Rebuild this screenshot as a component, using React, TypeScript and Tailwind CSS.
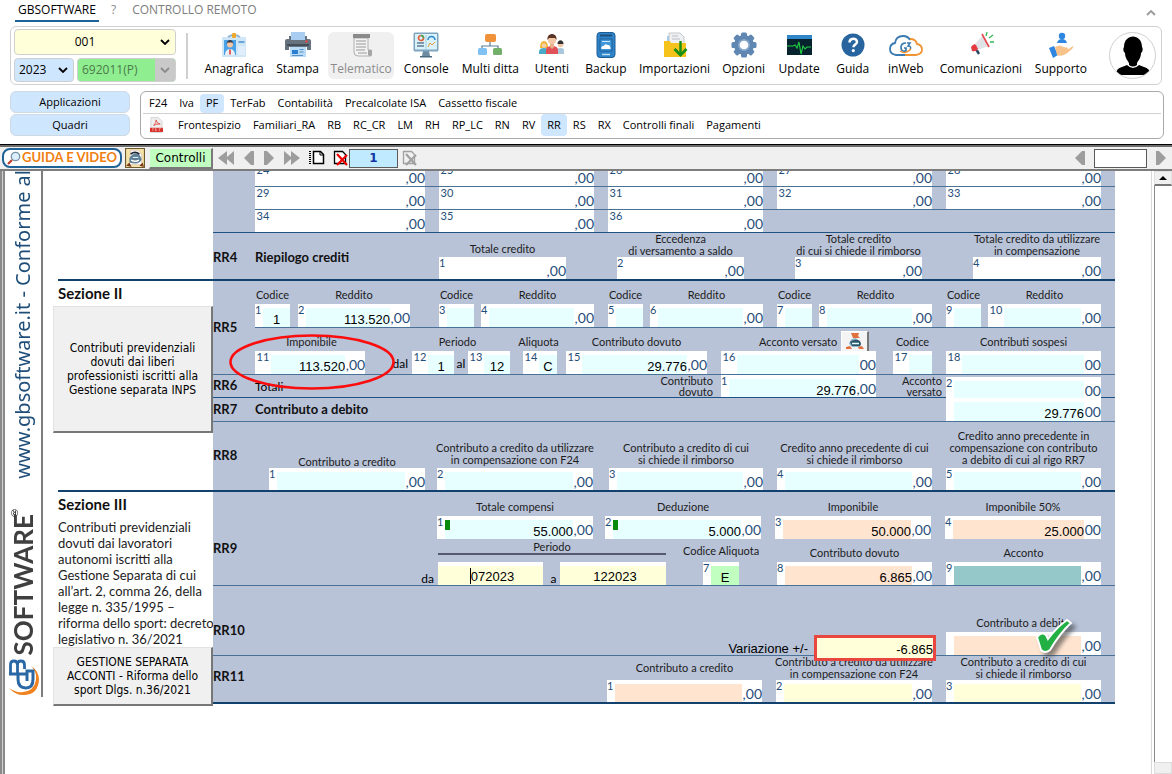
import type { ReactNode } from "react";

const TEAL = "bg-[#e8ffff]";
const PEACH = "bg-[#ffe4cf]";
const YELLOW = "bg-[#ffffd9]";

/* ---------- icons ---------- */

function BadgeIcon() {
  return (
    <svg width="26" height="26" viewBox="0 0 26 26">
      <rect x="1" y="5" width="24" height="20" rx="1" fill="#cfe6f7" />
      <rect x="3" y="8" width="12" height="15" fill="#4aa3e8" />
      <path d="M7 5q6-4 12 0" stroke="#8fb4d4" strokeWidth="2" fill="none" />
      <rect x="11" y="1" width="4" height="5" rx="1" fill="#f0a92b" />
      <circle cx="9" cy="12.500" r="3" fill="#f3c6a5" />
      <path d="M5.500 12.500c0-6 7-6 7 0l-1-2H6.500z" fill="#3a3a44" />
      <path d="M4 23c0-8 10-8 10 0z" fill="#e9eef4" />
      <path d="M9 17.500v5" stroke="#d33" strokeWidth="1.500" />
      <path d="M17.500 10h6" stroke="#4a8fd0" strokeWidth="1.500" />
      <path d="M17 14h7v9h-7z" fill="#dfeefa" />
    </svg>
  );
}

function PrinterIcon() {
  return (
    <svg width="26" height="26" viewBox="0 0 26 26">
      <path d="M6 0h14v9H6z" fill="#a9cdf0" />
      <path d="M0 9q0-2 2-2h2V4h2v4h14V4h2v3h2q2 0 2 2v9h-4v-3H4v3H0z" fill="#66727e" />
      <path d="M2 12h22v2H2z" fill="#434e59" />
      <circle cx="21.500" cy="9.500" r="1.200" fill="#e44" />
      <path d="M5 15h16v10H5z" fill="#b9dbf7" />
      <path d="M7 18h6v4H7z" fill="#2b7fd0" />
      <path d="M14.500 17.500h4M14.500 20h4M7 23.500h11" stroke="#5a93c4" />
    </svg>
  );
}

function ReceiptIcon() {
  return (
    <svg width="26" height="26" viewBox="0 0 26 26">
      <path d="M6 6h14v12h3v6H10q-4 0-4-4z" fill="#f3f3f3" stroke="#b0b0b0" />
      <path d="M5 2h17v4H5z" fill="#8b8b8b" />
      <path d="M8 9h10M8 12h10M8 15h10M8 18h9M10 21h9" stroke="#9a9a9a" strokeWidth="1.200" />
      <path d="M20 18h4v5q-2 2-4 0z" fill="#a5a5a5" />
    </svg>
  );
}

function ConsoleIcon() {
  return (
    <svg width="26" height="26" viewBox="0 0 26 26">
      <path d="M10 19h6l1 5h-8z" fill="#6d8ba0" />
      <path d="M7 24h12v1.500H7z" fill="#4b6a80" />
      <rect x="0.500" y="0.500" width="25" height="19" rx="1.500" fill="#7fa4bd" />
      <rect x="2" y="2" width="22" height="15.500" fill="#d9f2fb" />
      <circle cx="8" cy="6" r="2.500" fill="none" stroke="#e2603c" strokeWidth="1.700" />
      <path d="M8 3.500a2.500 2.500 0 0 1 2.500 2.500" fill="none" stroke="#3cae5a" strokeWidth="1.700" />
      <path d="M15 8a3.500 3.500 0 0 1 7 0" fill="none" stroke="#2b86c8" strokeWidth="1.500" />
      <path d="M13 3v14" stroke="#a8cfe0" />
      <path d="M4 11h7M4 14h7" stroke="#5d7b90" strokeWidth="1.500" />
      <path d="M15 15l2-4 2 2 3-3" fill="none" stroke="#e99b3b" />
    </svg>
  );
}

function OrgIcon() {
  return (
    <svg width="26" height="26" viewBox="0 0 26 26">
      <path d="M13 10v4M5 17v-3h16v3" fill="none" stroke="#5d7e9c" strokeWidth="1.200" />
      <rect x="8" y="2" width="11" height="8" rx="2" fill="#f0923a" />
      <rect x="1" y="16" width="9" height="7" rx="1.500" fill="#7fc1f2" />
      <rect x="16" y="16" width="9" height="7" rx="1.500" fill="#72b06a" />
    </svg>
  );
}

function UsersIcon() {
  return (
    <svg width="26" height="26" viewBox="0 0 26 26">
      <path d="M0 22v-2q0-4 5-4t5 4v2z" fill="#49a9c9" />
      <path d="M1 16q0-7 4-7t4 7z" fill="#f2b630" />
      <circle cx="5" cy="13.500" r="2.300" fill="#f6cfae" />
      <path d="M18 22v-4q0-2 3.500-2t3.500 2v4z" fill="#a9c8dd" />
      <circle cx="21.500" cy="12.500" r="2.800" fill="#f3c6a5" />
      <path d="M18.500 12c0-5 6-5 6 0z" fill="#333" />
      <path d="M7 22v-4q0-4 6-4t6 4v4z" fill="#e05258" />
      <path d="M11 11h4v4l-2 2-2-2z" fill="#e8b08b" />
      <circle cx="13" cy="8" r="4" fill="#f3c6a5" />
      <path d="M8.500 8c-1-8 10-8 9 0l-1.500-2h-6z" fill="#5b3428" />
    </svg>
  );
}

function BackupIcon() {
  return (
    <svg width="26" height="26" viewBox="0 0 26 26">
      <rect x="4" y="0.500" width="18" height="25" rx="3" fill="#2f83c6" stroke="#1c5d96" />
      <path d="M7 3.500h12" stroke="#1c4f80" strokeWidth="2" />
      <path d="M7 7h12v12H7z" fill="#3f97da" stroke="#1c5d96" />
      <path d="M9 9.500h8" stroke="#cde8fb" />
      <path d="M8.500 17q-1-3 2-3 2-3 4-1 3-.5 3 4z" fill="#fff" />
      <path d="M9 22.500h8" stroke="#bfe0f7" strokeWidth="1.500" />
    </svg>
  );
}

function ImportIcon() {
  return (
    <svg width="26" height="26" viewBox="0 0 26 26">
      <path d="M5 4h3v6H5z" fill="#9ec9ee" />
      <path d="M7 1h11l4 4v9H7z" fill="#eef0f2" stroke="#c4c8cc" />
      <path d="M10 4h6M10 7h8" stroke="#b8bec4" />
      <path d="M2 9h6l1 2h15v14H2z" fill="#f6c21c" />
      <path d="M18.500 9v13" stroke="#159015" strokeWidth="2.400" />
      <path d="M12.500 17l6 6 6-6" fill="none" stroke="#159015" strokeWidth="2.800" />
    </svg>
  );
}

function GearIcon() {
  return (
    <svg width="26" height="26" viewBox="0 0 26 26">
      <g fill="#5f87b2">
        <circle cx="13" cy="13" r="10" />
        {[0, 45, 90, 135].map((a) => (
          <rect key={a} x="10" y="0.500" width="6" height="25" rx="1.500" transform={`rotate(${a} 13 13)`} />
        ))}
      </g>
      <circle cx="13" cy="13" r="6" fill="#86a8cb" />
      <circle cx="13" cy="13" r="4.300" fill="#fff" />
    </svg>
  );
}

function PulseIcon() {
  return (
    <svg width="26" height="26" viewBox="0 0 26 26">
      <rect x="1" y="3" width="25" height="20" fill="#06232e" />
      <rect x="1" y="3" width="25" height="4" fill="#2f86c9" />
      <path d="M1 14h6l2-1 2 3 2-6 2 12 2-8 2 3 2-2h4" fill="none" stroke="#22d142" strokeWidth="1.100" />
    </svg>
  );
}

function HelpIcon() {
  return (
    <svg width="26" height="26" viewBox="0 0 26 26">
      <circle cx="13" cy="13" r="11.500" fill="#28659e" />
      <path d="M9.500 10.500c0-5 7.500-5 7.500-.6 0 2.600-3.600 2.600-3.600 5.400" fill="none" stroke="#fff" strokeWidth="2.500" />
      <circle cx="13.300" cy="18.600" r="1.600" fill="#fff" />
    </svg>
  );
}

function CloudIcon() {
  return (
    <svg width="36" height="26" viewBox="0 0 36 26">
      <path d="M17 23H8q-6-1-6-6 0-5 5-6 1-7 8-7 5 0 7 4" fill="none" stroke="#3a7ab0" strokeWidth="1.800" />
      <path d="M17 23h11q6-1 6-5.500 0-4.500-5-5.500-1-5-7-5" fill="none" stroke="#f09433" strokeWidth="1.800" />
      <path d="M18 11q-5 0-5 4.500t5 3.500v-3h-2" fill="none" stroke="#3a7ab0" strokeWidth="1.700" />
      <path d="M19 11h3l-2 3q4 0 2 4" fill="none" stroke="#3a7ab0" strokeWidth="1.500" />
      <path d="M12 19q5 4 11-2" fill="none" stroke="#f09433" strokeWidth="1.200" />
    </svg>
  );
}

function MegaphoneIcon() {
  return (
    <svg width="26" height="26" viewBox="0 0 26 26">
      <path d="M8 17l3 5" stroke="#2e4a66" strokeWidth="2.500" />
      <path d="M7 12l8-9 6 11-12 4z" fill="#dfe3e8" />
      <path d="M3 15q3-4 5-2l2 4q-2 3-6 2z" fill="#e33a3f" />
      <path d="M14 2l7 13" stroke="#e8484c" strokeWidth="1.600" />
      <path d="M18 4l1-4M21 6l4-3M22 10h4" stroke="#35b856" strokeWidth="1.300" />
    </svg>
  );
}

function SupportIcon() {
  return (
    <svg width="26" height="26" viewBox="0 0 26 26">
      <circle cx="14" cy="4" r="3.200" fill="#2f86e0" />
      <path d="M9 11q1-4 5-4t5 4z" fill="#2f86e0" />
      <path d="M1 16l5-2 4 9-5 3z" fill="#2f86e0" />
      <path d="M7 15q5-3 8 0l4 .5q2 1 0 2.500l6-4q1 1-2 4l-5 4q-5 3-9 1z" fill="#f7c38a" />
    </svg>
  );
}

function PdfIcon() {
  return (
    <svg width="13" height="16" viewBox="0 0 14 17">
      <path d="M1 .5h8l4 4v12H1z" fill="#eee" stroke="#d5d5d5" />
      <path d="M4 9q3-3 2.500-6Q7 7 11 7.500 7 7 4 9z" fill="none" stroke="#d9322b" strokeWidth=".8" />
      <path d="M0 11.500h14V16H0z" fill="#d9322b" />
      <path d="M3 15v-3h1.500M6 12v3q2-1.500 0-3M10 15v-3h2" fill="none" stroke="#f6b8b5" strokeWidth=".7" />
    </svg>
  );
}

function PrintDocIcon() {
  return (
    <svg width="20" height="20" viewBox="0 0 18 18">
      <path d="M.5.5h17v17H.5z" fill="#f5e3a6" stroke="#6d5a30" />
      <path d="M5 2h7l3 4v9H4z" fill="#fff" stroke="#caa" strokeWidth=".5" />
      <path d="M4 9q4-6 9-3l2 4q-1 4-6 4T4 12z" fill="#5e7f96" />
      <path d="M5 5.500q4-3 8 0" fill="none" stroke="#1c2430" strokeWidth="1.500" />
      <path d="M5.500 11q4 2 7 0" fill="none" stroke="#fff" strokeWidth="1.300" />
      <path d="M7 8.500h5" stroke="#d8eaf4" />
      <path d="M1 16l3-3 2 4zM17 17l-4-1 3-3z" fill="#7a3b1a" />
    </svg>
  );
}

function ScannerIcon() {
  return (
    <svg width="22" height="18" viewBox="0 0 22 18">
      <path d="M7 1h8l-1 3 2 2H9z" fill="#e2703f" />
      <path d="M5 12q1-6 7-6l5 5-1 4H8z" fill="#8fb6ca" />
      <path d="M6 10q5-4 10-1l1 3-1 2H8z" fill="#2e5468" />
      <path d="M8 11.500h7" stroke="#dff" strokeWidth="1.500" />
      <path d="M2 15l4-1 2 3H2zM14 15l4-1 2 3h-5z" fill="#e2703f" />
    </svg>
  );
}

function ArrowIcon({ left, double }: { left?: boolean; double?: boolean }) {
  return (
    <svg width={double ? 18 : 12} height="16" viewBox={double ? "0 0 18 16" : "0 0 12 16"} className={left ? "-scale-x-100" : ""}>
      {double ? (
        <path d="M1 1v14l7-6v6l9-7-9-7v6z" fill="#9d9d9d" />
      ) : (
        <path d="M1 1h3l7 7-7 7H1z" fill="#9d9d9d" />
      )}
    </svg>
  );
}

function NewDocIcon() {
  return (
    <svg width="16" height="16" viewBox="0 0 16 16">
      <path d="M4.500 1.500h7l3 3v9h-10z" fill="#fff" stroke="#000" strokeWidth="1.500" />
      <path d="M11 1v4h4" fill="none" stroke="#000" />
      <path d="M1 1v13" stroke="#000" strokeWidth="2" strokeDasharray="1 1" />
    </svg>
  );
}

function DeleteDocIcon({ muted }: { muted?: boolean }) {
  const line = muted ? "#a0a0a0" : "#000";
  return (
    <svg width="16" height="16" viewBox="0 0 16 16">
      <path d="M1.500 1.500h8l3 3v9h-11z" fill={muted ? "#f0f0f0" : "#fff"} stroke={line} strokeWidth="1.300" />
      <path d="M4 4l10 11M14 5L4 15" stroke={muted ? "#a0a0a0" : "#f00000"} strokeWidth="2.200" />
    </svg>
  );
}

function Chevron({ className = "" }: { className?: string }) {
  return (
    <svg width="10" height="6" viewBox="0 0 10 6" className={className}>
      <path d="M1 1l4 4 4-4" fill="none" stroke="currentColor" strokeWidth="1.800" />
    </svg>
  );
}

/* ---------- ribbon ---------- */

const TOOLS: { name: string; icon: ReactNode; off?: boolean }[] = [
  { name: "Anagrafica", icon: <BadgeIcon /> },
  { name: "Stampa", icon: <PrinterIcon /> },
  { name: "Telematico", icon: <ReceiptIcon />, off: true },
  { name: "Console", icon: <ConsoleIcon /> },
  { name: "Multi ditta", icon: <OrgIcon /> },
  { name: "Utenti", icon: <UsersIcon /> },
  { name: "Backup", icon: <BackupIcon /> },
  { name: "Importazioni", icon: <ImportIcon /> },
  { name: "Opzioni", icon: <GearIcon /> },
  { name: "Update", icon: <PulseIcon /> },
  { name: "Guida", icon: <HelpIcon /> },
  { name: "inWeb", icon: <CloudIcon /> },
  { name: "Comunicazioni", icon: <MegaphoneIcon /> },
  { name: "Supporto", icon: <SupportIcon /> },
];

function Combo({ label, value, box, text, disabled }: { label: string; value: string; box: string; text: string; disabled?: boolean }) {
  return (
    <div className={`relative flex overflow-hidden rounded border border-[#cfcfcf] ${box}`}>
      <select aria-label={label} defaultValue={value} disabled={disabled} className={`w-full appearance-none pl-1 outline-none ${text}`}>
        <option>{value}</option>
      </select>
      <span className={`pointer-events-none absolute inset-y-0 right-0 flex w-5 items-center justify-center ${disabled ? "bg-[#c9c9c9] text-[#8a8a8a]" : "text-black"}`}>
        <Chevron />
      </span>
    </div>
  );
}

function Ribbon() {
  return (
    <div className="mx-[10px] flex h-[59px] items-center rounded-md border border-[#d0d0d0] bg-white pl-[3px] pr-[5px]">
      <div className="flex w-[162px] shrink-0 flex-col gap-[3px]">
        <Combo label="Ditta" value="001" box="h-[26px] bg-[#ffffd9]" text="pr-6 text-center" />
        <div className="flex gap-[3px]">
          <Combo label="Anno" value="2023" box="h-6 w-[60px] bg-[#cfe6ff]" text="pr-4" />
          <Combo label="Codice attività" value="692011(P)" box="h-6 flex-1 bg-[#8fee8f]" text="text-[#4d7a4d]" disabled />
        </div>
      </div>
      <div className="ml-[10px] mr-[10px] h-[46px] w-[2px] bg-[#cfcfcf]" />
      <div className="grid min-w-0 flex-1 grid-cols-[72fr_55fr_72fr_58fr_70fr_53fr_55fr_82fr_56fr_55fr_52fr_54fr_96fr_64fr]">
        {TOOLS.map((t) => (
          <button
            key={t.name}
            type="button"
            disabled={t.off}
            className={`mx-[3px] flex h-[47px] min-w-0 flex-col items-center gap-[3px] whitespace-nowrap rounded-md ${t.off ? "bg-[#f0f0f0] text-[#8c8c8c]" : "text-black"}`}
          >
            {t.icon}
            <span className="leading-4">{t.name}</span>
          </button>
        ))}
      </div>
      <button type="button" aria-label="Profilo" className="ml-4 flex size-[47px] shrink-0 items-center justify-center overflow-hidden rounded-full border border-[#cfcfcf] bg-white">
        <svg width="36" height="40" viewBox="0 0 36 40">
          <path d="M9 11C9-3 27-3 27 11c1 1 1 5-1 6 0 5-3 8-4 10v2q-4 3-8 0v-2c-1-2-4-5-4-10-2-1-2-5-1-6z" />
          <path d="M1 39q0-7 6-8l5-2q6 6 12 0l5 2q6 1 6 8z" />
        </svg>
      </button>
    </div>
  );
}

const APPS = ["F24", "Iva", "PF", "TerFab", "Contabilità", "Precalcolate ISA", "Cassetto fiscale"];
const QUADRI = ["Frontespizio", "Familiari_RA", "RB", "RC_CR", "LM", "RH", "RP_LC", "RN", "RV", "RR", "RS", "RX", "Controlli finali", "Pagamenti"];

function Links({ items, active, label, children }: { items: string[]; active: string; label: string; children?: ReactNode }) {
  return (
    <nav aria-label={label} className="flex items-stretch whitespace-nowrap">
      {children}
      {items.map((i) => (
        <a key={i} href="#" className={`flex items-center px-[6px] ${i === active ? "rounded bg-[#cfe6ff]" : ""}`}>
          {i}
        </a>
      ))}
    </nav>
  );
}

function Toolbar() {
  return (
    <div className="flex h-[26px] shrink-0 items-center border-y-2 border-b-[#7d7d7d] border-t-[#6d6d6d] bg-[#f0f0f0] pl-[2px] pr-[5px]">
      <button type="button" className="flex h-5 w-[120px] items-center justify-center gap-px whitespace-nowrap rounded-lg border-2 border-[#1f6297] bg-white font-['Lato'] text-[13px] font-bold text-[#f08010]">
        <svg width="14" height="14" viewBox="0 0 14 14" className="shrink-0">
          <path d="M1 13l4-4" stroke="#c0392b" strokeWidth="2.200" />
          <circle cx="8.500" cy="5.500" r="4.200" fill="#dcefff" stroke="#7b93a8" strokeWidth="1.300" />
        </svg>
        GUIDA E VIDEO
      </button>
      <button type="button" aria-label="Stampa quadro" className="ml-[3px]"><PrintDocIcon /></button>
      <button type="button" className="ml-1 h-[21px] w-[64px] border border-b-2 border-r-2 border-[#f0f0f0] border-b-[#7a7a7a] border-r-[#7a7a7a] bg-[#c0ffc0] text-center font-['DejaVu_Sans'] text-xs">Controlli</button>
      <div className="flex items-center gap-2 pl-1">
        <button type="button" aria-label="Primo"><ArrowIcon left double /></button>
        <button type="button" aria-label="Precedente"><ArrowIcon left /></button>
        <button type="button" aria-label="Successivo"><ArrowIcon /></button>
        <button type="button" aria-label="Ultimo"><ArrowIcon double /></button>
      </div>
      <button type="button" aria-label="Nuovo modulo" className="ml-2"><NewDocIcon /></button>
      <button type="button" aria-label="Elimina modulo" className="ml-2"><DeleteDocIcon /></button>
      <input aria-label="Modulo" defaultValue="1" className="h-[19px] w-[49px] border border-[#5a5a5a] bg-[#c0eaff] text-center font-['DejaVu_Sans'] text-xs font-bold text-[#1034a6]" />
      <button type="button" aria-label="Elimina" className="ml-1"><DeleteDocIcon muted /></button>
      <div className="ml-auto flex items-center gap-2">
        <button type="button" aria-label="Indietro"><ArrowIcon left /></button>
        <input aria-label="Pagina" className="h-[19px] w-[53px] border border-[#5a5a5a] bg-white" />
        <button type="button" aria-label="Avanti"><ArrowIcon /></button>
      </div>
    </div>
  );
}

/* ---------- form ---------- */

type FieldProps = {
  n?: number;
  value?: string;
  tint?: string;
  wide?: boolean;
  short?: boolean;
  suffix?: string;
  name: string;
  align?: string;
  marker?: boolean;
};

function Field({ n, value = "", tint = TEAL, wide, short, suffix = ",00", name, align = "text-right", marker }: FieldProps) {
  return (
    <label className={`flex min-w-0 flex-1 bg-white font-['Lato'] text-[#1f4e79] ${short ? "h-[22px]" : "h-[23px]"}`}>
      <span className={`shrink-0 overflow-visible text-[11px] leading-3 ${wide ? "w-4 text-center" : "w-2"}`}>{n}</span>
      {marker && (
        <span className="relative w-0">
          <span className="absolute left-0 top-1 h-[10px] w-[5px] bg-[#0a8a0a]" />
        </span>
      )}
      <input
        aria-label={name}
        defaultValue={value}
        className={`mt-1 w-0 min-w-0 flex-1 pt-1 font-['Liberation_Sans'] text-[13px] leading-[15px] text-black outline-none ${tint} ${align}`}
      />
      {suffix && <span className={`shrink-0 pt-[5px] text-right text-sm leading-[17px] ${suffix === "00" ? "w-[17px]" : "w-5"}`}>{suffix}</span>}
    </label>
  );
}

function Cap({ children, leading = "leading-3", className = "" }: { children: ReactNode; leading?: string; className?: string }) {
  return <div className={`flex min-w-0 flex-col items-center whitespace-nowrap text-center text-[11px] text-[#1c1c1c] ${leading} ${className}`}>{children}</div>;
}

function Col({ lines, pad = "pr-3.5", gap = "", children }: { lines?: string[]; pad?: string; gap?: string; children?: ReactNode }) {
  return (
    <div className={`flex min-w-0 flex-col justify-end ${pad}`}>
      {lines && (
        <Cap className={gap}>
          {lines.map((l) => (
            <span key={l}>{l}</span>
          ))}
        </Cap>
      )}
      <div className="flex">{children}</div>
    </div>
  );
}

function Quadro({ code, line, pad = "", children }: { code: string; line: string; pad?: string; children: ReactNode }) {
  return (
    <div className={`grid grid-cols-[42fr_860fr] ${line}`}>
      <div className={`flex items-center text-[13px] font-bold text-[#111] ${pad}`}>{code}</div>
      <div className="min-w-0">{children}</div>
    </div>
  );
}

const THIN = "border-b border-[#4a7298]";
const FIVE = "grid grid-cols-[184fr_169fr_169fr_169fr_169fr]";
const CODICI = "grid grid-cols-[43fr_141fr_42fr_127fr_42fr_127fr_42fr_127fr_42fr_127fr]";
const RR5B = "grid grid-cols-[157fr_56fr_55fr_43fr_155fr_172fr_53fr_169fr]";

function SezioneI() {
  return (
    <div className="bg-[#b8c3d8]">
      <div className="grid grid-cols-[42fr_860fr]">
        <div />
        <div>
          <div className={`${FIVE} ${THIN} h-4 content-end overflow-hidden`}>
            {[24, 25, 26, 27, 28].map((n) => (
              <Col key={n}><Field n={n} short wide tint="bg-white" name={`Campo ${n}`} /></Col>
            ))}
          </div>
          <div className={`${FIVE} ${THIN}`}>
            {[29, 30, 31, 32, 33].map((n) => (
              <Col key={n}><Field n={n} short wide tint="bg-white" name={`Campo ${n}`} /></Col>
            ))}
          </div>
          <div className={FIVE}>
            {[34, 35, 36].map((n) => (
              <Col key={n}><Field n={n} short wide tint="bg-white" name={`Campo ${n}`} /></Col>
            ))}
          </div>
        </div>
      </div>
      <Quadro code="RR4" line="border-t border-[#1f5283]" pad="pt-1">
        <div className="grid h-[46px] grid-cols-[184fr_178fr_178fr_178fr_142fr]">
          <div className="flex items-center whitespace-nowrap pt-1 text-[13px] font-bold text-[#111]">Riepilogo crediti</div>
          <Col pad="pr-[51px]" gap="mb-0.5" lines={["Totale credito"]}><Field n={1} short tint="bg-white" name="Totale credito" /></Col>
          <Col pad="pr-[51px]" lines={["Eccedenza", "di versamento a saldo"]}><Field n={2} short tint="bg-white" name="Eccedenza di versamento a saldo" /></Col>
          <Col pad="pr-[51px]" lines={["Totale credito", "di cui si chiede il rimborso"]}><Field n={3} short tint="bg-white" name="Rimborso" /></Col>
          <Col lines={["Totale credito da utilizzare", "in compensazione"]}><Field n={4} short tint="bg-white" name="Compensazione" /></Col>
        </div>
      </Quadro>
    </div>
  );
}

function Rr5() {
  return (
    <Quadro code="RR5" line={THIN}>
      <div className={`${CODICI} h-[47px] border-b border-[#4a7298]`}>
        <Col pad="pr-2" gap="mb-[3px]" lines={["Codice"]}><Field n={1} value="1" suffix="" align="text-center" name="Codice 1" /></Col>
        <Col pad="pr-[29px]" gap="mb-[3px]" lines={["Reddito"]}><Field n={2} value="113.520" name="Reddito 1" /></Col>
        {[3, 5, 7, 9].flatMap((n) => [
          <Col key={n} pad="pr-[7px]" gap="mb-[3px]" lines={["Codice"]}><Field n={n} suffix="" name={`Codice ${n}`} /></Col>,
          <Col key={n + 1} gap="mb-[3px]" lines={["Reddito"]}><Field n={n + 1} wide={n === 9} name={`Reddito ${n}`} /></Col>,
        ])}
      </div>
      <div className={`${RR5B} h-[23px] items-center pt-1`}>
        <Cap className="pr-11">Imponibile</Cap>
        <Cap className="col-span-2 pr-5">Periodo</Cap>
        <Cap className="pr-3">Aliquota</Cap>
        <Cap className="pr-3.5">Contributo dovuto</Cap>
        <div className="flex h-[19px] min-w-0 items-center gap-1 pl-[38px]">
          <Cap className="shrink-0">Acconto versato</Cap>
          <button type="button" aria-label="Stampa acconti" className="flex h-[22px] w-7 shrink-0 items-center justify-center border border-b-2 border-r-2 border-white border-b-[#777] border-r-[#777] bg-[#f4f4f4]">
            <ScannerIcon />
          </button>
        </div>
        <Cap className="pr-3.5">Codice</Cap>
        <Cap className="pr-3.5">Contributi sospesi</Cap>
      </div>
      <div className={RR5B}>
        <div className="relative flex min-w-0 items-end">
          <div className="flex flex-[113]"><Field n={11} wide value="113.520" name="Imponibile" /></div>
          <span className="flex-[44] pr-1 text-right text-xs leading-5">dal</span>
          <svg className="absolute -left-[27px] -top-[18px] z-10" width="168" height="58" viewBox="0 0 168 58">
            <ellipse cx="84" cy="29" rx="81.500" ry="26.500" fill="none" stroke="#fb0d0d" strokeWidth="2.600" />
          </svg>
        </div>
        <div className="flex min-w-0 items-end">
          <div className="flex flex-[42]"><Field n={12} wide value="1" suffix="" align="text-center" name="Periodo dal" /></div>
          <span className="flex-[14] text-center text-xs leading-5">al</span>
        </div>
        <div className="flex min-w-0 pr-[13px]"><Field n={13} wide value="12" suffix="" align="text-center" name="Periodo al" /></div>
        <div className="flex min-w-0 pr-[9px]"><Field n={14} wide value="C" suffix="" align="text-center" name="Aliquota" /></div>
        <Col><Field n={15} wide value="29.776" name="Contributo dovuto" /></Col>
        <Col pad="pr-[17px]"><Field n={16} wide suffix="00" name="Acconto versato" /></Col>
        <Col><Field n={17} wide suffix="" name="Codice sospesi" /></Col>
        <Col><Field n={18} wide suffix="00" name="Contributi sospesi" /></Col>
      </div>
    </Quadro>
  );
}

function SezioneII() {
  return (
    <div className="bg-[#b8c3d8]">
      <Rr5 />
      <Quadro code="RR6" line="border-b border-[#1f5283]">
        <div className="grid h-[22px] grid-cols-[466fr_225fr_169fr]">
          <div className="flex justify-between pr-2">
            <span className="text-xs leading-6">Totali</span>
            <Cap leading="leading-[11px]" className="items-end">
              <span>Contributo</span>
              <span>dovuto</span>
            </Cap>
          </div>
          <div className="flex min-w-0 justify-between pr-1">
            <div className="flex flex-[155]"><Field n={1} short value="29.776" name="Totale contributo dovuto" /></div>
            <Cap leading="leading-[11px]" className="flex-[66] items-end">
              <span>Acconto</span>
              <span>versato</span>
            </Cap>
          </div>
          <Col><Field n={2} short suffix="00" name="Totale acconto versato" /></Col>
        </div>
      </Quadro>
      <Quadro code="RR7" line={THIN}>
        <div className="grid grid-cols-[691fr_169fr]">
          <span className="text-[13px] font-bold leading-[23px] text-[#111]">Contributo a debito</span>
          <Col><Field value="29.776" suffix="00" name="Contributo a debito" /></Col>
        </div>
      </Quadro>
      <Quadro code="RR8" line="">
        <div className="grid h-[68px] grid-cols-[182fr_172fr_168fr_169fr_169fr]">
          <Col pad="pl-3.5 pr-3" lines={["Contributo a credito"]}><Field n={1} short name="Contributo a credito" /></Col>
          <Col pad="pr-4" gap="mb-0.5" lines={["Contributo a credito da utilizzare", "in compensazione con F24"]}><Field n={2} short name="Credito da utilizzare" /></Col>
          <Col gap="mb-0.5" lines={["Contributo a credito di cui", "si chiede il rimborso"]}><Field n={3} short name="Credito a rimborso" /></Col>
          <Col gap="mb-0.5" lines={["Credito anno precedente di cui", "si chiede il rimborso"]}><Field n={4} short name="Credito anno precedente" /></Col>
          <Col gap="mb-0.5" lines={["Credito anno precedente in", "compensazione con contributo", "a debito di cui al rigo RR7"]}><Field n={5} short name="Credito in compensazione" /></Col>
        </div>
      </Quadro>
    </div>
  );
}

function Rr9() {
  return (
    <Quadro code="RR9" line={THIN} pad="pt-5">
      <div className="grid h-[47px] grid-cols-[182fr_168fr_170fr_170fr_170fr]">
        <div />
        <Col pad="pr-3" gap="mb-[3px]" lines={["Totale compensi"]}><Field n={1} marker value="55.000" name="Totale compensi" /></Col>
        <Col gap="mb-[3px]" lines={["Deduzione"]}><Field n={2} marker value="5.000" name="Deduzione" /></Col>
        <Col gap="mb-[3px]" lines={["Imponibile"]}><Field n={3} tint={PEACH} value="50.000" name="Imponibile RR9" /></Col>
        <Col gap="mb-[3px]" lines={["Imponibile 50%"]}><Field n={4} tint={PEACH} value="25.000" suffix="00" name="Imponibile 50%" /></Col>
      </div>
      <div className="grid h-[23px] grid-cols-[183fr_265fr_74fr_169fr_169fr]">
        <div />
        <div className="min-w-0 pr-[37px] pt-[2px]">
          <Cap className="border-b-2 border-[#555a70]">Periodo</Cap>
        </div>
        <Cap className="justify-center pr-[38px]">Codice Aliquota</Cap>
        <Cap className="justify-center pb-0.5 pr-3.5 pt-1.5">Contributo dovuto</Cap>
        <Cap className="justify-center pb-0.5 pr-3.5 pt-1.5">Acconto</Cap>
      </div>
      <div className="grid grid-cols-[183fr_122fr_143fr_74fr_169fr_169fr]">
        <span className="self-end pr-1 text-right text-xs leading-3">da</span>
        <div className="flex min-w-0 items-end">
          <label className="relative flex h-[23px] min-w-0 flex-[105] bg-white">
            <input aria-label="Periodo da" defaultValue="072023" className="mt-1 w-full min-w-0 bg-[#ffffd9] pl-1 pt-[2px] text-center font-['Liberation_Sans'] text-[13px] outline-none" />
            <span className="absolute left-8 top-[6px] h-4 w-px bg-black" />
          </label>
          <span className="flex-[13] pl-1 text-center text-xs leading-3">a</span>
        </div>
        <label className="mr-[37px] flex h-[23px] min-w-0 bg-white">
          <input aria-label="Periodo a" defaultValue="122023" className="mt-1 w-full min-w-0 bg-[#ffffd9] pl-1 pt-[3px] text-center font-['Liberation_Sans'] text-[13px] outline-none" />
        </label>
        <Col pad="pr-[38px]"><Field n={7} tint="bg-[#c0ffc0]" value="E" suffix="" align="text-center" name="Codice aliquota" /></Col>
        <Col><Field n={8} tint={PEACH} value="6.865" name="Contributo dovuto RR9" /></Col>
        <Col><Field n={9} tint="bg-[#95c8c8]" name="Acconto" /></Col>
      </div>
    </Quadro>
  );
}

function SezioneIII() {
  return (
    <div className="bg-[#b8c3d8]">
      <Rr9 />
      <Quadro code="RR10" line={THIN} pad="pt-5">
        <div className="relative grid h-[69px] grid-cols-[691fr_169fr]">
          <label htmlFor="variazione" className="self-end whitespace-nowrap pr-[138px] text-right font-['Liberation_Sans'] text-[13px] leading-3 text-black">Variazione +/-</label>
          <Col gap="mb-[3px]" lines={["Contributo a debito"]}><Field tint={PEACH} name="Contributo a debito RR10" /></Col>
          <input id="variazione" defaultValue="-6.865" className="absolute -bottom-[6px] right-[179px] z-10 h-[26px] w-[122px] border-[3px] border-[#e8463f] bg-[#ffffd9] pt-[2px] text-right font-['Liberation_Sans'] text-[13px] text-black outline-none" />
          <svg className="absolute bottom-0 right-[42px] z-10 drop-shadow-[4px_4px_2px_rgba(60,60,60,0.600)]" width="38" height="36" viewBox="0 0 38 36">
            <path d="M2 18q5-6 9-2l2 4Q22 8 32 1l4 3Q25 14 15 31q-5 4-9 0z" fill="#22b045" stroke="#fff" strokeWidth="2" />
          </svg>
        </div>
      </Quadro>
      <Quadro code="RR11" line="border-b-2 border-[#12416e]" pad="pb-1">
        <div className="grid h-[46px] grid-cols-[352fr_169fr_170fr_169fr]">
          <div />
          <Col gap="mb-1.5" lines={["Contributo a credito"]}><Field n={1} short tint={PEACH} name="Contributo a credito RR11" /></Col>
          <Col lines={["Contributo a credito da utilizzare", "in compensazione con F24"]}><Field n={2} short tint={YELLOW} name="Compensazione RR11" /></Col>
          <Col lines={["Contributo a credito di cui", "si chiede il rimborso"]}><Field n={3} short tint={YELLOW} name="Rimborso RR11" /></Col>
        </div>
      </Quadro>
    </div>
  );
}

function Side({ title, children }: { title?: string; children?: ReactNode }) {
  return (
    <div className="w-[170px] shrink-0">
      {title && <h2 className="pl-[15px] text-[15px] font-bold leading-[25px] text-[#111]">{title}</h2>}
      {children}
    </div>
  );
}

const SIDE_BTN = "ml-[10px] flex w-[160px] items-center justify-center border border-b-2 border-r-2 border-[#e2e2e2] border-b-[#777] border-r-[#777] bg-[#f0f0f0] text-center font-['DejaVu_Sans_Condensed'] text-xs leading-[14px] text-black";

function Brand() {
  return (
    <aside className="flex h-[526px] w-[38px] shrink-0 flex-col items-center justify-end overflow-hidden border-r-2 border-[#7d7d7d]">
      <div className="rotate-180 whitespace-nowrap pt-6 font-['Noto_Sans'] text-[20px] leading-6 text-[#1f4e79] [writing-mode:vertical-rl]">www.gbsoftware.it - Conforme al</div>
      <div className="flex rotate-180 whitespace-nowrap font-['Lato'] text-[26px] font-bold leading-7 text-[#3f3f3f] [writing-mode:vertical-rl]">
        SOFTWARE<sup className="text-[9px] leading-3">®</sup>
      </div>
      <svg width="34" height="42" viewBox="0 0 34 42" className="shrink-0">
        <path d="M25 11q8 5 8 14-1 14-14 15-9 1-16-7 7 5 14 4 11-1 13-12 1-8-5-14z" fill="#ef8322" />
        <path d="M3 19h17M4.500 19v-9q0-4 3.500-4t3.500 4v9M11.500 10q0-4 3.500-4t3.500 4v4" fill="none" stroke="#2a68a5" strokeWidth="2.800" />
        <path d="M12 20v4q0 9 8 9 7 0 7-9v-8h-6v10" fill="none" stroke="#2a68a5" strokeWidth="3" />
      </svg>
    </aside>
  );
}

export default function App() {
  return (
    <div className="flex h-screen flex-col overflow-hidden bg-white font-['Open_Sans','Noto_Sans',sans-serif] text-xs text-black">
      <header className="flex h-[26px] shrink-0 items-start justify-between pl-[15px] pr-4">
        <nav aria-label="Menu" className="flex h-[22px] items-stretch gap-3 whitespace-nowrap leading-5">
          <a href="#" className="border-b-2 border-[#1f6297] px-[3px]">GBSOFTWARE</a>
          <a href="#" className="text-[#8a8a8a]">?</a>
          <a href="#" className="pl-1 text-[#7d7d7d]">CONTROLLO REMOTO</a>
        </nav>
        <button type="button" aria-label="Comprimi" className="mt-[10px] text-[#9a9a9a]">
          <Chevron className="rotate-180" />
        </button>
      </header>
      <Ribbon />
      <div className="mb-[5px] ml-[10px] mr-2 mt-[6px] flex shrink-0 gap-[10px] text-[11px]">
        <div className="flex w-[120px] shrink-0 flex-col gap-px">
          <button type="button" className="h-[22px] rounded-md border border-[#cdd9e5] bg-[#cfe6ff]">Applicazioni</button>
          <button type="button" className="h-[22px] rounded-md border border-[#cdd9e5] bg-[#cfe6ff]">Quadri</button>
        </div>
        <div className="flex h-12 min-w-0 flex-1 flex-col rounded-md border border-[#a9a9a9] px-[2px] pt-[2px]">
          <div className="flex h-5 border-b border-[#d0d0d0]">
            <Links label="Applicazioni" items={APPS} active="PF" />
          </div>
          <div className="flex h-[22px]">
            <Links label="Quadri" items={QUADRI} active="RR">
              <span className="flex w-[29px] items-center pl-[7px]"><PdfIcon /></span>
            </Links>
          </div>
        </div>
      </div>
      <div className="h-px shrink-0 bg-black" />
      <Toolbar />
      <div className="flex min-h-0 flex-1">
        <div className="w-[5px] shrink-0 border-x-2 border-[#8a8a8a] bg-[#d0d0d0]" />
        <Brand />
        <main className="min-w-0 flex-1 overflow-hidden pr-9 font-['Lato']">
          <div className="flex">
            <Side />
            <div className="min-w-0 flex-1"><SezioneI /></div>
          </div>
          <div className="ml-[15px] h-[2px] bg-[#12416e]" />
          <div className="flex">
            <Side title="Sezione II">
              <button type="button" className={`${SIDE_BTN} h-[127px] px-2`}>Contributi previdenziali dovuti dai liberi professionisti iscritti alla Gestione separata INPS</button>
            </Side>
            <div className="min-w-0 flex-1"><SezioneII /></div>
          </div>
          <div className="ml-[15px] h-[2px] bg-[#12416e]" />
          <div className="flex">
            <Side title="Sezione III">
              <p className="whitespace-nowrap pl-[15px] pt-[2px] text-[13px] leading-4 text-[#1c1c1c]">
                Contributi previdenziali<br />dovuti dai lavoratori<br />autonomi iscritti alla<br />Gestione Separata di cui<br />all’art. 2, comma 26, della<br />legge n. 335/1995 –<br />riforma dello sport: decreto<br />legislativo n. 36/2021
              </p>
              <button type="button" className={`${SIDE_BTN} h-[59px] px-1`}>GESTIONE SEPARATA ACCONTI - Riforma dello sport Dlgs. n.36/2021</button>
            </Side>
            <div className="min-w-0 flex-1"><SezioneIII /></div>
          </div>
        </main>
        <div className="flex w-[21px] shrink-0 flex-col border-l border-[#d8d8d8] pl-[2px]">
          <button type="button" aria-label="Scorri su" className="flex h-[15px] shrink-0 items-center justify-center border border-b-2 border-[#e0e0e0] border-b-[#777] bg-[#f0f0f0]">
            <svg width="8" height="4" viewBox="0 0 8 4"><path d="M4 0l4 4H0z" /></svg>
          </button>
          <div className="flex-1 border-l border-[#8a8a8a]" />
          <div className="h-3 shrink-0 border border-[#dcdcdc] bg-[#f0f0f0]" />
        </div>
      </div>
    </div>
  );
}
